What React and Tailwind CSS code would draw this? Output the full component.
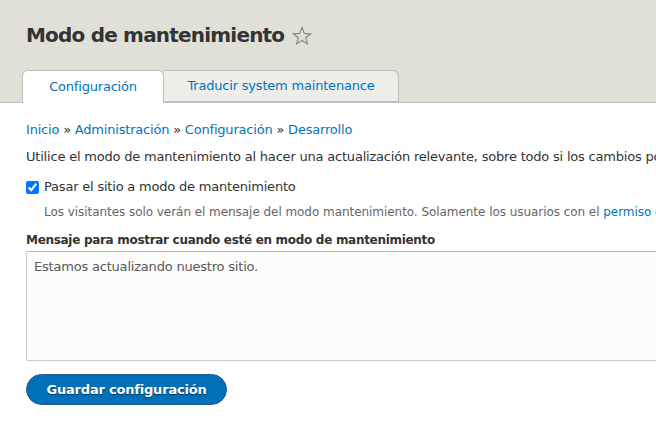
import React, { useState } from "react";

const font = { fontFamily: '"DejaVu Sans", "Lucida Sans Unicode", sans-serif' };

function Star() {
  return (
    <svg width="20" height="20" viewBox="0 0 20 20" className="ml-[8px] mt-[2px] shrink-0">
      <path
        d="M10 1.6 L12.4 7.4 L18.6 7.8 L13.8 11.8 L15.4 17.9 L10 14.5 L4.6 17.9 L6.2 11.8 L1.4 7.8 L7.6 7.4 Z"
        fill="none"
        stroke="#8a8a82"
        strokeWidth="1.2"
        strokeLinejoin="miter"
      />
    </svg>
  );
}

export default function App() {
  const [checked, setChecked] = useState(true);

  return (
    <div className="w-[656px] h-[447px] overflow-hidden bg-white text-[#333]" style={font}>
      <header className="bg-[#e0e0d8] border-b border-[#bfbfba] pt-[19px]">
        <div className="flex items-center px-[26px] h-[32px]">
          <h1 className="text-[20px] font-bold text-[#333] whitespace-nowrap tracking-[-0.8px]">
            Modo de mantenimiento
          </h1>
          <Star />
        </div>
        <nav className="flex px-[22px] mt-[19px] -mb-px tracking-[-0.2px]">
          <a className="w-[142px] h-[33px] flex items-center justify-center bg-white border border-b-0 border-[#bfbfba] rounded-t-[6px] text-[13px] text-[#0074bd]">
            Configuración
          </a>
          <a className="w-[235px] h-[32px] mb-px flex items-center justify-center bg-[#ededea] border border-l-0 border-[#bfbfba] rounded-tr-[6px] text-[13px] text-[#0074bd] whitespace-nowrap">
            Traducir system maintenance
          </a>
        </nav>
      </header>

      <main className="px-[26px] pt-[19px] whitespace-nowrap tracking-[-0.2px]">
        <div className="text-[13px] text-[#0074bd] leading-[16px]">
          Inicio <span className="text-[#333]">»</span> Administración{" "}
          <span className="text-[#333]">»</span> Configuración{" "}
          <span className="text-[#333]">»</span> Desarrollo
        </div>
        <p className="text-[13px] leading-[16px] mt-[11px]">
          Utilice el modo de mantenimiento al hacer una actualización relevante, sobre todo si los cambios podrían romper el sitio.
        </p>

        <label className="flex items-center gap-[5px] mt-[14px] text-[13px] leading-[16px]">
          <input
            type="checkbox"
            checked={checked}
            onChange={(e) => setChecked(e.target.checked)}
            className="w-[13px] h-[13px] accent-[#0075ff] m-0"
          />
          Pasar el sitio a modo de mantenimiento
        </label>
        <div className="ml-[18px] mt-[10px] text-[12px] leading-[15px] text-[#666] tracking-[-0.05px]">
          Los visitantes solo verán el mensaje del modo mantenimiento. Solamente los usuarios con el{" "}
          <span className="text-[#0074bd]">permiso</span> de acceso al sitio.
        </div>

        <label className="block mt-[12px] text-[12px] leading-[16px] font-bold text-[#333] tracking-[-0.3px]">
          Mensaje para mostrar cuando esté en modo de mantenimiento
        </label>
        <textarea
          readOnly
          defaultValue="Estamos actualizando nuestro sitio."
          className="block mt-[3px] w-[680px] h-[110px] resize-none bg-[#fcfcfa] border border-[#ccc] border-t-[#b4b4b4] rounded-[2px] px-[7px] py-[6px] text-[13px] leading-[18px] text-[#595959] outline-none tracking-[-0.2px]"
          style={font}
        />

        <button className="mt-[13px] w-[201px] h-[31px] rounded-full bg-[#0071b8] border border-[#1e5c90] text-white font-bold text-[13px] tracking-[-0.2px] [text-shadow:0_1px_1px_rgba(0,0,0,0.5)]">
          Guardar configuración
        </button>
      </main>
    </div>
  );
}
